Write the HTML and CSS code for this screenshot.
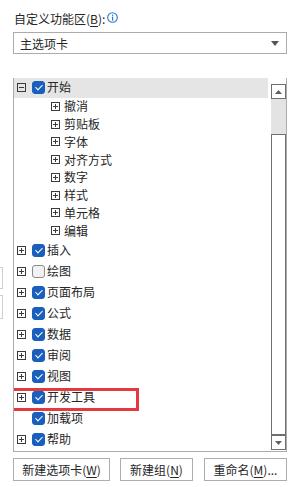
FILE: index.html
```html
<!DOCTYPE html>
<html lang="zh-CN">
<head>
    <meta charset="UTF-8">
    <meta name="viewport" content="width=device-width, initial-scale=1.0">
    <title>自定义功能区</title>
    <link rel="stylesheet" href="styles.css">
</head>
<body>
<div class="page">

    <!-- edge of the neighbouring pane, cut off -->
    <div class="edge">
        <div class="edge-box"></div>
        <div class="edge-box"></div>
    </div>

    <div class="panel">
        <div class="label">
            自定义功能区(<u>B</u>):
            <svg class="info" width="11" height="11" viewBox="0 0 11 11">
                <circle cx="5.5" cy="5.5" r="4.8" fill="#fff" stroke="#2a77cc" stroke-width="1.1"/>
                <rect x="5" y="2.6" width="1.2" height="1.3" fill="#2a77cc"/>
                <rect x="5" y="4.6" width="1.2" height="4" fill="#2a77cc"/>
            </svg>
        </div>

        <div class="select">
            <span>主选项卡</span>
            <svg width="8" height="5" viewBox="0 0 8 5"><path d="M0 0h8L4 5z" fill="#555"/></svg>
        </div>

        <div class="tree">
            <div class="rows">
                <div class="row top selected"><span class="exp"></span><span class="cb on"></span><span class="txt">开始</span></div>
                <div class="row sub"><span class="exp plus"></span><span class="txt">撤消</span></div>
                <div class="row sub"><span class="exp plus"></span><span class="txt">剪贴板</span></div>
                <div class="row sub"><span class="exp plus"></span><span class="txt">字体</span></div>
                <div class="row sub"><span class="exp plus"></span><span class="txt">对齐方式</span></div>
                <div class="row sub"><span class="exp plus"></span><span class="txt">数字</span></div>
                <div class="row sub"><span class="exp plus"></span><span class="txt">样式</span></div>
                <div class="row sub"><span class="exp plus"></span><span class="txt">单元格</span></div>
                <div class="row sub"><span class="exp plus"></span><span class="txt">编辑</span></div>
                <div class="row top"><span class="exp plus"></span><span class="cb on"></span><span class="txt">插入</span></div>
                <div class="row top"><span class="exp plus"></span><span class="cb"></span><span class="txt">绘图</span></div>
                <div class="row top"><span class="exp plus"></span><span class="cb on"></span><span class="txt">页面布局</span></div>
                <div class="row top"><span class="exp plus"></span><span class="cb on"></span><span class="txt">公式</span></div>
                <div class="row top"><span class="exp plus"></span><span class="cb on"></span><span class="txt">数据</span></div>
                <div class="row top"><span class="exp plus"></span><span class="cb on"></span><span class="txt">审阅</span></div>
                <div class="row top"><span class="exp plus"></span><span class="cb on"></span><span class="txt">视图</span></div>
                <div class="row top"><span class="exp plus"></span><span class="cb on"></span><span class="txt">开发工具</span></div>
                <div class="row top"><span class="exp none"></span><span class="cb on"></span><span class="txt">加载项</span></div>
                <div class="row top"><span class="exp plus"></span><span class="cb on"></span><span class="txt">帮助</span></div>
            </div>

            <div class="scrollbar">
                <div class="sb-btn"><svg width="7" height="4" viewBox="0 0 7 4"><path d="M0 4h7L3.5 0z" fill="#606060"/></svg></div>
                <div class="sb-track"></div>
                <div class="sb-thumb"></div>
                <div class="sb-btn"><svg width="7" height="4" viewBox="0 0 7 4"><path d="M0 0h7L3.5 4z" fill="#606060"/></svg></div>
            </div>

            <!-- red marker drawn over the list -->
            <div class="mark"></div>
        </div>

        <div class="buttons">
            <div class="btn w1">新建选项卡(<u>W</u>)</div>
            <div class="btn w2">新建组(<u>N</u>)</div>
            <div class="btn w3">重命名(<u>M</u>)...</div>
        </div>
    </div>
</div>
</body>
</html>
```

FILE: styles.css
```css
body { margin: 0; background: #fff; font-family: "Noto Sans CJK SC", "Microsoft YaHei", sans-serif; font-size: 12px; color: #262626; }
.page { display: flex; width: 296px; height: 487px; overflow: hidden; }

.edge { width: 3px; padding-top: 267px; }
.edge-box { height: 20px; border: 1px solid #cfcfcf; border-left: none; margin-bottom: 6px; background: #fff; }
.edge-box + .edge-box { height: 22px; }

.panel { margin-left: 10px; width: 274px; padding-top: 11px; }

.label { height: 16px; line-height: 16px; padding-left: 1px; display: flex; align-items: flex-start; }
.label u { text-decoration-thickness: 1px; text-underline-offset: 2px; }
.info { margin-left: 2px; margin-top: 1px; }

.select { margin-top: 5px; height: 22px; box-sizing: border-box; border: 1px solid #ababab; display: flex; align-items: center; justify-content: space-between; padding: 0 7px 0 6px; }

.tree { position: relative; margin-top: 24px; height: 374px; box-sizing: border-box; border: 1px solid #ababab; border-top: none; display: flex; overflow: hidden; }
.rows { width: 254px; margin-top: -1.5px; }
.row { display: flex; align-items: center; white-space: nowrap; }
.row.top { height: 21px; padding-left: 3px; }
.row.sub { height: 17.75px; padding-left: 37px; }
.row.selected { background: #e5e5e5; }
.txt { line-height: 16px; }
.row.top .txt { margin-left: 2px; }
.row.sub .txt { margin-left: 4px; }

.exp { width: 9px; height: 9px; box-sizing: border-box; border: 1px solid #3a3a3a; position: relative; flex: none; }
.exp::before { content: ""; position: absolute; left: 1px; right: 1px; top: 3px; height: 1px; background: #3a3a3a; }
.exp.plus::after { content: ""; position: absolute; top: 1px; bottom: 1px; left: 3px; width: 1px; background: #3a3a3a; }
.exp.none { border-color: transparent; }
.exp.none::before { display: none; }

.cb { width: 13px; height: 13px; box-sizing: border-box; margin-left: 6px; border-radius: 3px; border: 1px solid #8a8a8a; background: #f2f2f2; position: relative; flex: none; }
.cb.on { background: #1a5fbd; border-color: #1a5fbd; }
.cb.on::after { content: ""; position: absolute; left: 4px; top: 1.5px; width: 3px; height: 6px; border: solid #fff; border-width: 0 1.3px 1.3px 0; transform: rotate(45deg); }

.scrollbar { margin-left: 3px; width: 15px; padding-top: 6px; display: flex; flex-direction: column; }
.sb-btn { height: 15px; box-sizing: border-box; border: 1px solid #6f6f6f; display: flex; align-items: center; justify-content: center; background: #fff; }
.sb-track { height: 35px; background: #e3e3e3; }
.sb-thumb { height: 301px; box-sizing: border-box; border: 1px solid #6f6f6f; background: #fff; }

.mark { position: absolute; left: -7px; top: 310px; width: 132px; height: 23px; box-sizing: border-box; border: 3px solid #e23a3f; }

.buttons { display: flex; margin-top: 6px; }
.btn { height: 23px; box-sizing: border-box; border: 1px solid #adadad; display: flex; align-items: center; justify-content: center; margin-right: 10px; }
.btn u { text-underline-offset: 2px; }
.w1 { width: 97px; }
.w2 { width: 73px; }
.w3 { width: 83px; margin-left: 1px; margin-right: 0; }
```
